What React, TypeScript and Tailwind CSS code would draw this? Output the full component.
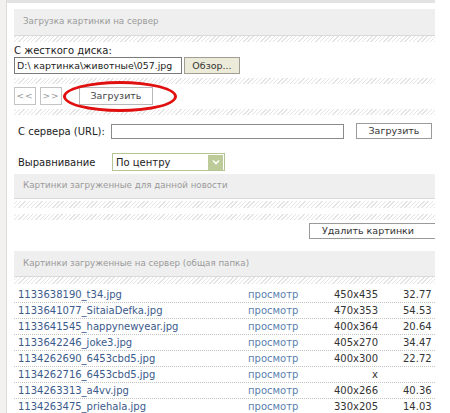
const hatch =
  'bg-[repeating-linear-gradient(-45deg,#e4e4e4_0px,#e4e4e4_1px,#ffffff_1px,#ffffff_3px)]';

const FILES = [
  { name: '1133638190_t34.jpg', dims: '450x435', size: '32.77' },
  { name: '1133641077_SitaiaDefka.jpg', dims: '470x353', size: '54.53' },
  { name: '1133641545_happynewyear.jpg', dims: '400x364', size: '20.64' },
  { name: '1133642246_joke3.jpg', dims: '405x270', size: '34.47' },
  { name: '1134262690_6453cbd5.jpg', dims: '400x300', size: '22.72' },
  { name: '1134262716_6453cbd5.jpg', dims: 'x', size: '0' },
  { name: '1134263313_a4vv.jpg', dims: '400x266', size: '40.36' },
  { name: '1134263475_priehala.jpg', dims: '330x205', size: '14.03' },
];

function SectionHeader({ title, className = '' }: { title: string; className?: string }) {
  return (
    <div
      className={`flex items-center pl-[9px] bg-[#efefef] border-b border-[#d9d9d9] text-[8.7px] text-[#9a9a9a] ${className}`}
    >
      {title}
    </div>
  );
}

export default function App() {
  return (
    <div className="relative flex w-[450px] h-[413px] overflow-hidden bg-white font-['DejaVu_Sans',sans-serif] text-[10px] text-[#222]">
      <div className="w-[7px] shrink-0 bg-[#f2f1ef] border-r border-[#dedcd8]" />
      <div className="w-[428px] shrink-0 flex flex-col overflow-hidden">
        <div className="h-[3px] shrink-0 bg-[#e3e3e3]" />
        <div className="pl-[7px] flex flex-col shrink-0">
          <SectionHeader title="Загрузка картинки на сервер" className="mt-[6px] h-[27px]" />
          <div className={`h-[6px] ${hatch}`} />

          <div className="mt-[3px] h-[12px] leading-[12px]">С жесткого диска:</div>
          <div className="flex h-[17px] gap-[2px]">
            <div className="w-[168px] border border-[#7a7a7a] flex items-center pl-[2px] leading-none whitespace-nowrap overflow-hidden text-[9.4px]">
              D:\ картинка\животные\057.jpg
            </div>
            <button className="w-[56px] bg-[#ecead8] border border-[#a09e94] text-[#333] text-[9.5px] leading-none">
              Обзор...
            </button>
          </div>

          <div className={`mt-[4px] h-[6px] ${hatch}`} />

          <div className="mt-[3px] h-[18px] flex">
            <button className="w-[22px] border border-[#c4c4c4] text-[#9a9a9a] text-[9px] leading-none tracking-[1px]">&lt;&lt;</button>
            <button className="ml-[4px] w-[22px] border border-[#c4c4c4] text-[#9a9a9a] text-[9px] leading-none tracking-[1px]">&gt;&gt;</button>
            <button className="ml-[17px] w-[74px] border border-[#b8b8b8] text-[#444] text-[9.5px] leading-none">Загрузить</button>
          </div>

          <div className={`mt-[4px] h-[6px] ${hatch}`} />

          <div className="mt-[8px] h-[16px] flex items-center">
            <span className="pl-[4px] w-[97px] whitespace-nowrap">С сервера (URL):</span>
            <div className="w-[233px] h-[15px] border border-[#8a8a8a]" />
            <button className="ml-[12px] w-[76px] h-[16px] border border-[#9a9a9a] text-[#333] text-[9.5px] leading-none">
              Загрузить
            </button>
          </div>

          <div className="mt-[14px] h-[18px] flex items-center">
            <span className="pl-[4px] w-[98px]">Выравнивание</span>
            <div className="w-[113px] h-[18px] border border-[#b4c494] flex items-center">
              <span className="flex-1 pl-[3px] text-[#222]">По центру</span>
              <span className="w-[15px] h-[15px] mr-[1px] bg-[#bccb98] flex items-center justify-center">
                <svg width="8" height="6" viewBox="0 0 8 6">
                  <path d="M1 1.5 L4 4.5 L7 1.5" stroke="#fff" strokeWidth="1.6" fill="none" />
                </svg>
              </span>
            </div>
          </div>

          <SectionHeader title="Картинки загруженные для данной новости" className="mt-[3px] h-[25px]" />
          <div className={`mt-[2px] h-[7px] ${hatch}`} />
          <div className={`mt-[6px] h-[6px] ${hatch}`} />

          <div className="mt-[3px] h-[16px] flex pl-[295px]">
            <button className="w-[130px] shrink-0 h-[16px] border border-[#9a9a9a] text-[#333] text-[9.5px] leading-none text-left pl-[12px]">
              Удалить картинки
            </button>
          </div>

          <SectionHeader title="Картинки загруженные на сервер (общая папка)" className="mt-[12px] h-[26px]" />
          <div className={`h-[7px] ${hatch}`} />

          <div className="mt-[3px] flex flex-col">
            {FILES.map(f => (
              <div
                key={f.name}
                className="h-[16px] shrink-0 grid grid-cols-[230px_70px_60px_1fr] items-center pl-[4px] border-b border-dotted border-[#c4c4c4] whitespace-nowrap"
              >
                <span className="text-[#3a5a8c]">{f.name}</span>
                <span className="text-[#5b7fb0]">просмотр</span>
                <span className="text-right text-[#333]">{f.dims}</span>
                <span className={`text-[#333] ${f.size === '0' ? 'pl-[59px]' : 'pl-[25px]'}`}>{f.size}</span>
              </div>
            ))}
          </div>
        </div>
      </div>

      <div className="absolute left-[63px] top-[81px] w-[114px] h-[31px] rounded-[50%] border-[3px] border-[#e01010]" />
    </div>
  );
}
